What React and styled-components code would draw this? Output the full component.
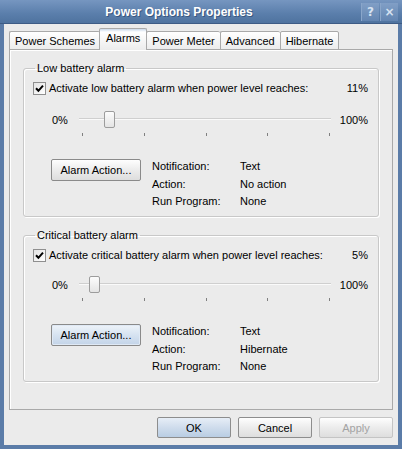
import React from "react";
import styled, { createGlobalStyle } from "styled-components";

const GlobalStyle = createGlobalStyle`
  html, body {
    margin: 0;
    padding: 0;
    background: #ebebeb;
  }
  body {
    font-family: "Liberation Sans", Arial, sans-serif;
    font-size: 11px;
    color: #000;
  }
`;

const tabs = ["Power Schemes", "Alarms", "Power Meter", "Advanced", "Hibernate"];

const alarms = [
  {
    title: "Low battery alarm",
    label: "Activate low battery alarm when power level reaches:",
    level: 11,
    action: "No action",
    focused: false,
    compact: false,
  },
  {
    title: "Critical battery alarm",
    label: "Activate critical battery alarm when power level reaches:",
    level: 5,
    action: "Hibernate",
    focused: true,
    compact: true,
  },
];

const CheckIcon = () => (
  <svg width="9" height="9" viewBox="0 0 9 9">
    <path d="M1 4.3 L3.4 6.8 L8 1.6" fill="none" stroke="#000" strokeWidth="2" />
  </svg>
);

const AlarmGroup = ({ alarm }) => (
  <Group $compact={alarm.compact}>
    <Legend>{alarm.title}</Legend>
    <CheckRow>
      <CheckBox>
        <CheckIcon />
      </CheckBox>
      <CheckLabel>{alarm.label}</CheckLabel>
      <Level>{alarm.level}%</Level>
    </CheckRow>
    <SliderRow $compact={alarm.compact}>
      <SliderEnd>0%</SliderEnd>
      <Slider>
        <Track />
        <Thumb style={{ left: `${Math.round(alarm.level * 2.41 - 2)}px` }} />
        <Ticks>
          {[0, 1, 2, 3, 4].map((i) => (
            <Tick key={i} />
          ))}
        </Ticks>
      </Slider>
      <SliderEnd $right>100%</SliderEnd>
    </SliderRow>
    <ActionRow>
      <ActionButton $focused={alarm.focused}>Alarm Action...</ActionButton>
      <InfoGrid>
        <span>Notification:</span>
        <span>Text</span>
        <span>Action:</span>
        <span>{alarm.action}</span>
        <span>Run Program:</span>
        <span>None</span>
      </InfoGrid>
    </ActionRow>
  </Group>
);

const App = () => {
  return (
    <>
      <GlobalStyle />
      <Window>
        <TitleBar>
          <Title>Power Options Properties</Title>
          <TitleButton>?</TitleButton>
          <TitleButton>×</TitleButton>
        </TitleBar>
        <Body>
          <TabRow>
            {tabs.map((t) => (
              <Tab key={t} $active={t === "Alarms"}>
                {t}
              </Tab>
            ))}
          </TabRow>
          <Panel>
            {alarms.map((a) => (
              <AlarmGroup key={a.title} alarm={a} />
            ))}
          </Panel>
          <Footer>
            <DialogButton $default>OK</DialogButton>
            <DialogButton>Cancel</DialogButton>
            <DialogButton $disabled>Apply</DialogButton>
          </Footer>
        </Body>
      </Window>
    </>
  );
};

export default App;

const Window = styled.div`
  width: 402px;
  height: 449px;
  display: flex;
  flex-direction: column;
  box-sizing: border-box;
`;

const TitleBar = styled.div`
  height: 24px;
  flex-shrink: 0;
  display: flex;
  align-items: center;
  gap: 1px;
  padding-right: 4px;
  background: linear-gradient(#7696c0, #5a7eab 60%, #4f739f);
  border-bottom: 1px solid #3d5b85;
  box-sizing: border-box;
`;

const Title = styled.div`
  flex: 1;
  text-align: center;
  color: #fff;
  font-family: "Liberation Sans", Arial, sans-serif;
  font-weight: bold;
  font-size: 12px;
  text-shadow: 1px 1px 0 #3a5780;
  padding-right: 2px;
`;

const TitleButton = styled.div`
  width: 17px;
  height: 18px;
  display: flex;
  align-items: center;
  justify-content: center;
  color: #d7e3f2;
  font-family: "DejaVu Sans", sans-serif;
  font-weight: bold;
  font-size: 12px;
  background: linear-gradient(#819fc6, #6385b1);
  border-left: 1px solid #8aa6ca;
`;

const Body = styled.div`
  flex: 1;
  display: flex;
  flex-direction: column;
  background: #ebebeb;
  border: 4px solid #5b7ca8;
  border-top: none;
  padding: 5px 5px 0 5px;
  box-sizing: border-box;
`;

const TabRow = styled.div`
  display: flex;
  align-items: flex-end;
  height: 21px;
  position: relative;
  z-index: 1;
  margin-bottom: -1px;
`;

const Tab = styled.div`
  height: ${(p) => (p.$active ? "22px" : "19px")};
  box-sizing: border-box;
  padding: ${(p) => (p.$active ? "3px 6px 0" : "3px 5px 0")};
  margin: ${(p) => (p.$active ? "0 -1px" : "0")};
  border: 1px solid #a9a9a9;
  border-bottom: ${(p) => (p.$active ? "none" : "1px solid #a9a9a9")};
  border-right: ${(p) => (p.$active ? "1px solid #a9a9a9" : "none")};
  border-radius: 2px 2px 0 0;
  background: ${(p) =>
    p.$active
      ? "linear-gradient(#c9d8ea 0, #ffffff 3px, #ececec 100%)"
      : "linear-gradient(#ffffff, #ececec)"};
  line-height: 13px;
  white-space: nowrap;
  position: relative;
  z-index: ${(p) => (p.$active ? 2 : 1)};
  &:last-child {
    border-right: 1px solid #a9a9a9;
  }
`;

const Panel = styled.div`
  height: 361px;
  box-sizing: border-box;
  border: 1px solid #a9a9a9;
  box-shadow: inset 1px 1px 0 #fff;
  background: #ebebeb;
  padding: 11px 13px 0 13px;
  display: flex;
  flex-direction: column;
  gap: 11px;
`;

const Group = styled.fieldset`
  margin: 0;
  min-width: 0;
  border: 1px solid #c8c8c8;
  border-radius: 3px;
  box-shadow: 1px 1px 0 #fff, inset 1px 1px 0 #fff;
  padding: 6px 9px ${(p) => (p.$compact ? "8px" : "8px")} 9px;
`;

const Legend = styled.legend`
  margin-left: 2px;
  padding: 0 2px;
  line-height: 14px;
`;

const CheckRow = styled.div`
  display: flex;
  align-items: center;
  height: 14px;
  line-height: 14px;
`;

const CheckBox = styled.div`
  width: 13px;
  height: 13px;
  box-sizing: border-box;
  border: 1px solid #8f8f8f;
  background: linear-gradient(135deg, #e4e4e4, #ffffff);
  display: flex;
  align-items: center;
  justify-content: center;
  margin-right: 3px;
`;

const CheckLabel = styled.span`
  flex: 1;
`;

const Level = styled.span`
  margin-right: 1px;
`;

const SliderRow = styled.div`
  display: flex;
  align-items: flex-start;
  margin-top: ${(p) => (p.$compact ? "14px" : "16px")};
  padding-left: 19px;
  line-height: 13px;
`;

const SliderEnd = styled.span`
  width: ${(p) => (p.$right ? "auto" : "26px")};
  margin-left: ${(p) => (p.$right ? "auto" : "0")};
  margin-right: 1px;
  padding-top: 3px;
`;

const Slider = styled.div`
  position: relative;
  width: 252px;
  height: 25px;
`;

const Track = styled.div`
  position: absolute;
  left: 0;
  right: 0;
  top: 7px;
  height: 1px;
  background: #cfcfcf;
  box-shadow: 0 1px 0 #fafafa;
`;

const Thumb = styled.div`
  position: absolute;
  top: 0;
  width: 11px;
  height: 17px;
  box-sizing: border-box;
  border: 1px solid #9c9c9c;
  border-radius: 2px;
  background: linear-gradient(#fcfcfc, #e4e4e4);
`;

const Ticks = styled.div`
  position: absolute;
  left: 3px;
  right: 1px;
  top: 22px;
  display: flex;
  justify-content: space-between;
`;

const Tick = styled.div`
  width: 1px;
  height: 3px;
  background: #7f7f7f;
`;

const ActionRow = styled.div`
  display: flex;
  align-items: flex-start;
  margin-top: 23px;
  padding-left: 18px;
`;

const ActionButton = styled.div`
  width: 90px;
  height: 22px;
  box-sizing: border-box;
  border: 1px solid #8a8a8a;
  border-radius: 2px;
  display: flex;
  align-items: center;
  justify-content: center;
  background: ${(p) =>
    p.$focused
      ? "linear-gradient(#eef3f9, #d6e3f1 50%, #c3d4e8)"
      : "linear-gradient(#fefefe, #ececec 50%, #dddddd)"};
  box-shadow: ${(p) => (p.$focused ? "inset 0 0 0 1px #dfe9f5" : "none")};
`;

const InfoGrid = styled.div`
  display: grid;
  grid-template-columns: 88px auto;
  row-gap: 4.5px;
  margin-left: 11px;
  margin-top: 1px;
  line-height: 13px;
`;

const Footer = styled.div`
  display: flex;
  justify-content: flex-end;
  gap: 7px;
  padding-top: 7px;
`;

const DialogButton = styled.div`
  width: 74px;
  height: 21px;
  box-sizing: border-box;
  border: 1px solid ${(p) => (p.$disabled ? "#c4c4c4" : "#8d8d8d")};
  border-radius: 2px;
  display: flex;
  align-items: center;
  justify-content: center;
  color: ${(p) => (p.$disabled ? "#a3a3a3" : "#000")};
  background: ${(p) =>
    p.$default
      ? "linear-gradient(#e7eef7, #cfdcec 50%, #b9cde3)"
      : "linear-gradient(#fefefe, #ececec 50%, #dedede)"};
`;
